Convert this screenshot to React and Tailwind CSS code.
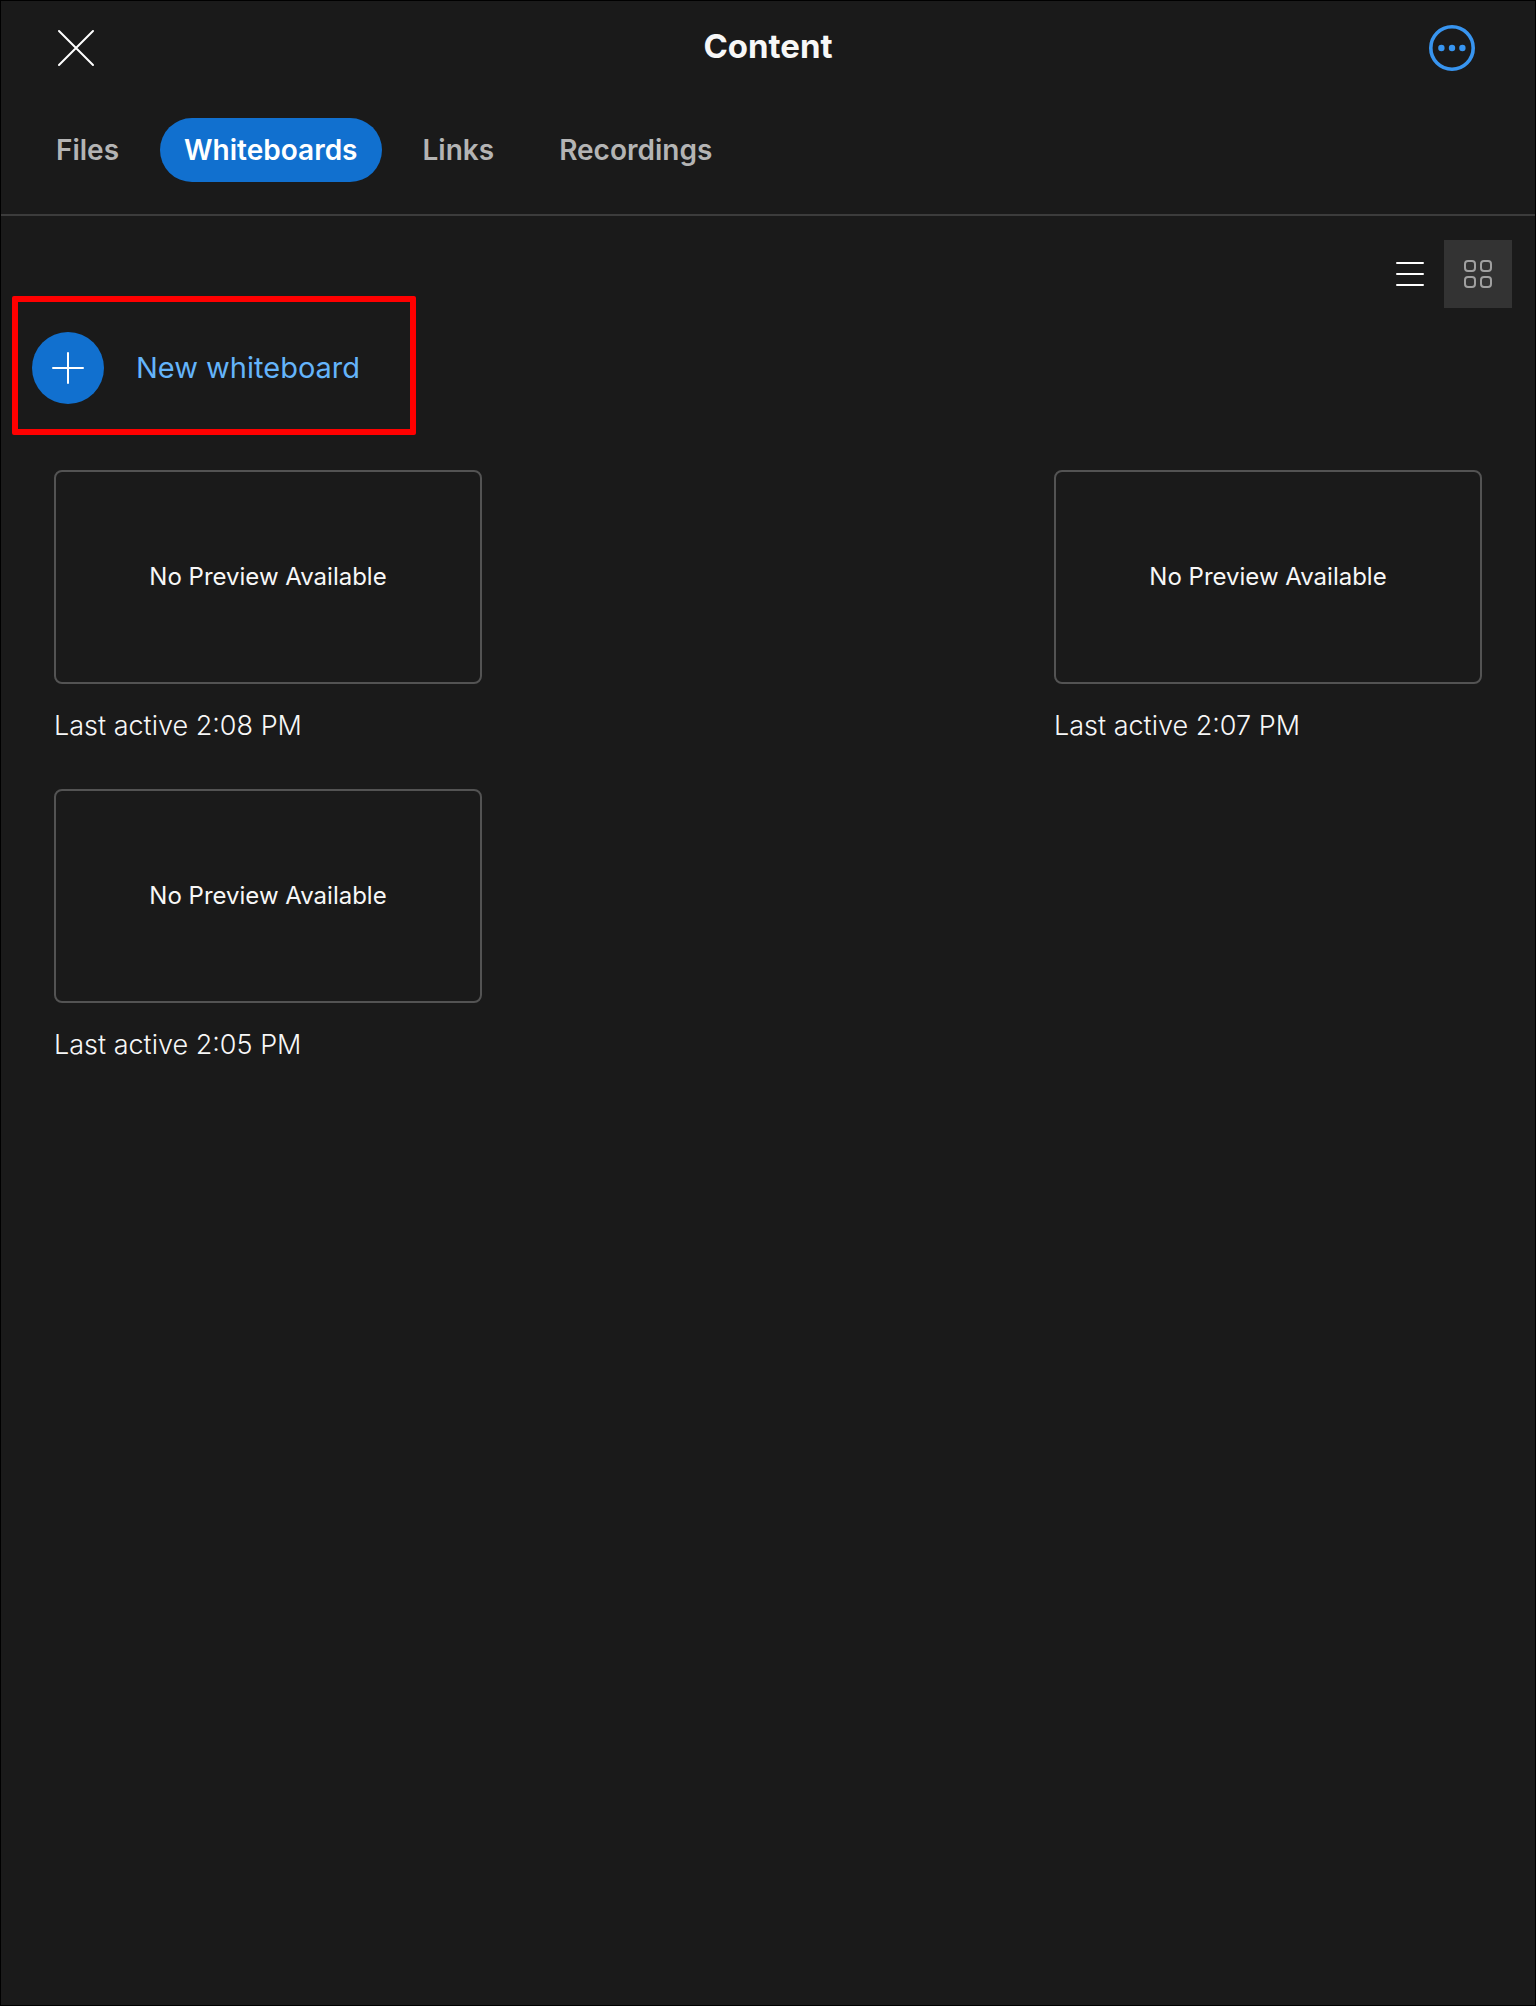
import React, { useState } from "react";
import clsx from "clsx";

const TABS = ["Files", "Whiteboards", "Links", "Recordings"];

const BOARDS = [
  { id: 1, time: "2:08 PM" },
  { id: 2, time: "2:07 PM" },
  { id: 3, time: "2:05 PM" },
];

function CloseIcon() {
  return (
    <svg width="38" height="38" viewBox="0 0 38 38" fill="none" stroke="#fff" strokeWidth="2" strokeLinecap="round">
      <path d="M2 2 36 36M36 2 2 36" />
    </svg>
  );
}

function MoreIcon() {
  return (
    <svg width="46" height="46" viewBox="0 0 46 46" fill="#3895f0">
      <circle cx="23" cy="23" r="21.2" fill="none" stroke="#3895f0" strokeWidth="3.6" />
      <circle cx="12.4" cy="23" r="3.2" />
      <circle cx="23" cy="23" r="3.2" />
      <circle cx="33.4" cy="23" r="3.2" />
    </svg>
  );
}

function ListIcon() {
  return (
    <svg width="28" height="28" viewBox="0 0 28 28" fill="none" stroke="#fff" strokeWidth="2" strokeLinecap="round">
      <path d="M1 3h26M1 14h26M1 25h26" />
    </svg>
  );
}

function GridIcon() {
  return (
    <svg width="28" height="28" viewBox="0 0 28 28" fill="none" stroke="#a0a0a0" strokeWidth="2">
      <rect x="1" y="1" width="10" height="10" rx="3" />
      <rect x="17" y="1" width="10" height="10" rx="3" />
      <rect x="1" y="17" width="10" height="10" rx="3" />
      <rect x="17" y="17" width="10" height="10" rx="3" />
    </svg>
  );
}

function PlusIcon() {
  return (
    <svg width="32" height="32" viewBox="0 0 32 32" fill="none" stroke="#fff" strokeWidth="2" strokeLinecap="round">
      <path d="M16 1v30M1 16h30" />
    </svg>
  );
}

function BoardCard({ time }) {
  return (
    <li>
      <button className="flex h-[214px] w-full items-center justify-center rounded-lg border-2 border-[#535353] text-[24px] text-[#f7f7f7]">
        No Preview Available
      </button>
      <p className="mt-6 text-[27px] leading-9 font-light text-[#f7f7f7]">
        Last active {time}
      </p>
    </li>
  );
}

export default function App() {
  const [tab, setTab] = useState("Whiteboards");
  const [view, setView] = useState("grid");

  return (
    <div className="min-h-screen border border-black bg-[#1a1a1a] font-['Inter',sans-serif]">
      <header className="grid h-[94px] grid-cols-3 items-center px-14">
        <button aria-label="Close" className="justify-self-start">
          <CloseIcon />
        </button>
        <h1 className="justify-self-center pb-1 text-[33px] leading-10 font-bold text-[#f7f7f7]">
          Content
        </h1>
        <button aria-label="More options" className="justify-self-end pr-1">
          <MoreIcon />
        </button>
      </header>

      <nav className="flex gap-[17px] border-b-2 border-[#3c3c3c] px-[31px] pt-[23px] pb-8">
        {TABS.map((name) => (
          <button
            key={name}
            onClick={() => setTab(name)}
            className={clsx(
              "h-16 rounded-full px-6 text-[28px] font-semibold",
              tab === name ? "bg-[#1170cf] text-white" : "text-[#b4b4b4]"
            )}
          >
            {name}
          </button>
        ))}
      </nav>

      <main>
        <div className="flex justify-end pt-6 pr-[23px]">
          <button
            aria-label="List view"
            onClick={() => setView("list")}
            className={clsx("flex size-[68px] items-center justify-center", view === "list" && "bg-[#333333]")}
          >
            <ListIcon />
          </button>
          <button
            aria-label="Grid view"
            onClick={() => setView("grid")}
            className={clsx("flex size-[68px] items-center justify-center", view === "grid" && "bg-[#333333]")}
          >
            <GridIcon />
          </button>
        </div>

        <div className="mt-6 px-[31px]">
          <button className="relative flex items-center gap-8 text-[29px] text-[#64b4fa]">
            <span className="flex size-[72px] items-center justify-center rounded-full bg-[#1170cf]">
              <PlusIcon />
            </span>
            New whiteboard
            <span className="absolute -top-9 -right-14 -bottom-[31px] -left-5 rounded-xs border-6 border-[#ff0000]" />
          </button>
        </div>

        <ul className="mt-[66px] grid grid-cols-[428px_428px] justify-between gap-y-[45px] px-[53px]">
          {BOARDS.map((board) => (
            <BoardCard key={board.id} time={board.time} />
          ))}
        </ul>
      </main>
    </div>
  );
}
